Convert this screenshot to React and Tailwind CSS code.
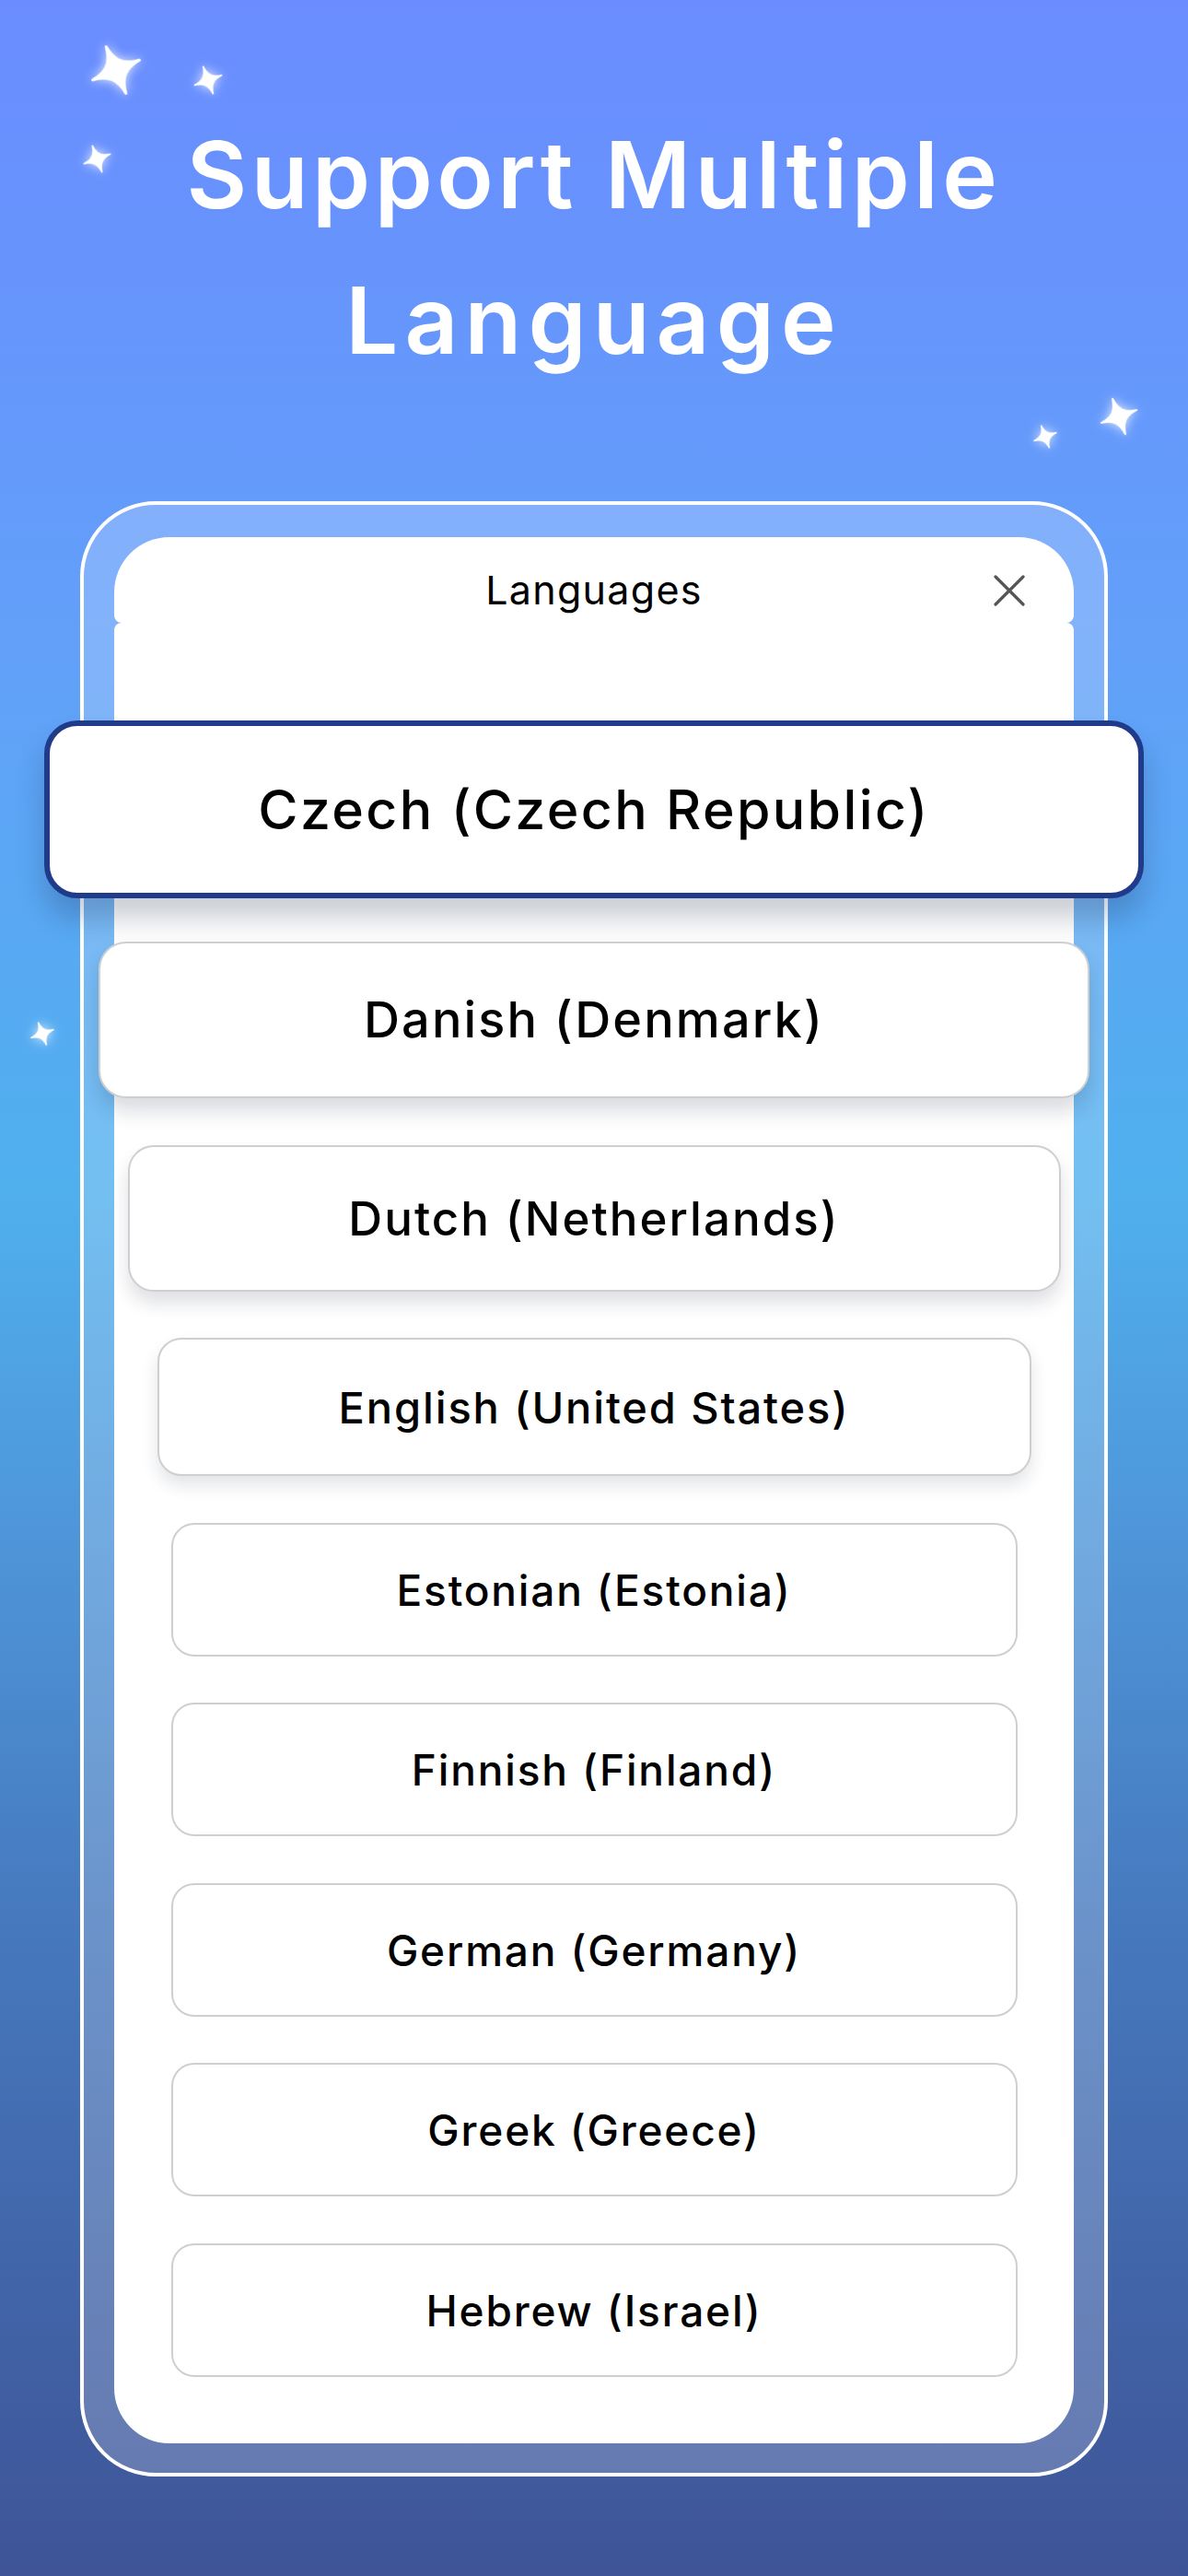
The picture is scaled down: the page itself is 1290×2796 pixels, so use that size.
import React from 'react';

const languages = [
  { name: 'Czech (Czech Republic)', box: 'w-[1194px] h-[193px] rounded-[36px] border-[6px] border-[#213b8b] shadow-[0_22px_30px_rgba(20,30,60,0.22)]', text: 'text-[59px]', mt: 'mt-0' },
  { name: 'Danish (Denmark)', box: 'w-[1076px] h-[170px] rounded-[30px] border-2 border-[#cfcfcf] shadow-[0_14px_22px_rgba(20,30,60,0.16)]', text: 'text-[54px]', mt: 'mt-[47px]' },
  { name: 'Dutch (Netherlands)', box: 'w-[1013px] h-[159px] rounded-[28px] border-2 border-[#cfcfcf] shadow-[0_12px_20px_rgba(20,30,60,0.14)]', text: 'text-[51px]', mt: 'mt-[51px]' },
  { name: 'English (United States)', box: 'w-[949px] h-[150px] rounded-[26px] border-2 border-[#cfcfcf] shadow-[0_10px_18px_rgba(20,30,60,0.12)]', text: 'text-[47px]', mt: 'mt-[50px]' },
  { name: 'Estonian (Estonia)', box: 'w-[919px] h-[145px] rounded-[25px] border-2 border-[#cfcfcf]', text: 'text-[46px]', mt: 'mt-[51px]' },
  { name: 'Finnish (Finland)', box: 'w-[919px] h-[145px] rounded-[25px] border-2 border-[#cfcfcf]', text: 'text-[46px]', mt: 'mt-[50px]' },
  { name: 'German (Germany)', box: 'w-[919px] h-[145px] rounded-[25px] border-2 border-[#cfcfcf]', text: 'text-[46px]', mt: 'mt-[51px]' },
  { name: 'Greek (Greece)', box: 'w-[919px] h-[145px] rounded-[25px] border-2 border-[#cfcfcf]', text: 'text-[46px]', mt: 'mt-[50px]' },
  { name: 'Hebrew (Israel)', box: 'w-[919px] h-[145px] rounded-[25px] border-2 border-[#cfcfcf]', text: 'text-[46px]', mt: 'mt-[51px]' },
];

const sparkles = [
  { pos: 'left-[96px] top-[46px]', size: 'w-[60px] h-[60px]', rot: '-rotate-[23deg]' },
  { pos: 'left-[209px] top-[70px]', size: 'w-[34px] h-[34px]', rot: '-rotate-[20deg]' },
  { pos: 'left-[89px] top-[156px]', size: 'w-[33px] h-[33px]', rot: '-rotate-[20deg]' },
  { pos: 'left-[1193px] top-[430px]', size: 'w-[44px] h-[44px]', rot: '-rotate-[20deg]' },
  { pos: 'left-[1121px] top-[460px]', size: 'w-[28px] h-[28px]', rot: '-rotate-[20deg]' },
  { pos: 'left-[32px] top-[1108px]', size: 'w-[28px] h-[28px]', rot: '-rotate-[20deg]' },
];

function Sparkle({ pos, size, rot }) {
  return (
    <svg
      viewBox="0 0 100 100"
      className={`absolute ${pos} ${size} ${rot} drop-shadow-[0_0_6px_rgba(255,255,255,0.85)]`}
    >
      <path
        d="M50 4 C54 34 66 46 96 50 C66 54 54 66 50 96 C46 66 34 54 4 50 C34 46 46 34 50 4 Z"
        fill="#ffffff"
        stroke="#ffffff"
        strokeWidth="5"
        strokeLinejoin="round"
      />
    </svg>
  );
}

function CloseIcon() {
  return (
    <svg viewBox="0 0 34 34" className="w-[34px] h-[34px]">
      <path d="M2 2 L32 32 M32 2 L2 32" stroke="#555555" strokeWidth="3.2" strokeLinecap="round" />
    </svg>
  );
}

export default function App() {
  return (
    <div
      className="relative w-[1290px] h-[2796px] overflow-hidden bg-[linear-gradient(180deg,#6a8cff_0%,#62a0f9_25%,#50b0ee_46%,#4e95d8_60%,#4678bd_75%,#3e5497_100%)]"
      style={{ fontFamily: 'Inter, "Liberation Sans", sans-serif' }}
    >
      {sparkles.map((s, i) => (
        <Sparkle key={i} {...s} />
      ))}

      {/* headline */}
      <h1 className="pt-[110px] text-center text-white font-semibold text-[101px] leading-[158px] tracking-[0.045em]">
        Support Multiple
        <br />
        <span className="tracking-[0.07em]">Language</span>
      </h1>

      {/* device frame */}
      <div className="mt-[118px] mx-auto w-[1116px] rounded-[82px] border-4 border-white bg-white/20 px-[33px] pt-[35px] pb-[32px]">
        <div className="flex flex-col">
          <div className="bg-white rounded-t-[60px] rounded-b-[8px] h-[93px] pt-[31px] grid grid-cols-[1fr_auto_1fr] items-start">
            <div />
            <div className="text-[43px] leading-[52px] tracking-[0.03em] text-black font-normal">Languages</div>
            <div className="flex justify-end pr-[53px] pt-[10px]">
              <CloseIcon />
            </div>
          </div>
          <div className="bg-white rounded-t-[8px] rounded-b-[60px] pt-[106px] pb-[72px] flex flex-col items-center">
            {languages.map((l) => (
              <div
                key={l.name}
                className={`${l.mt} ${l.box} shrink-0 bg-white flex items-center justify-center`}
              >
                <span className={`${l.text} text-black font-medium tracking-[0.04em] leading-none`}>{l.name}</span>
              </div>
            ))}
          </div>
        </div>
      </div>
    </div>
  );
}
